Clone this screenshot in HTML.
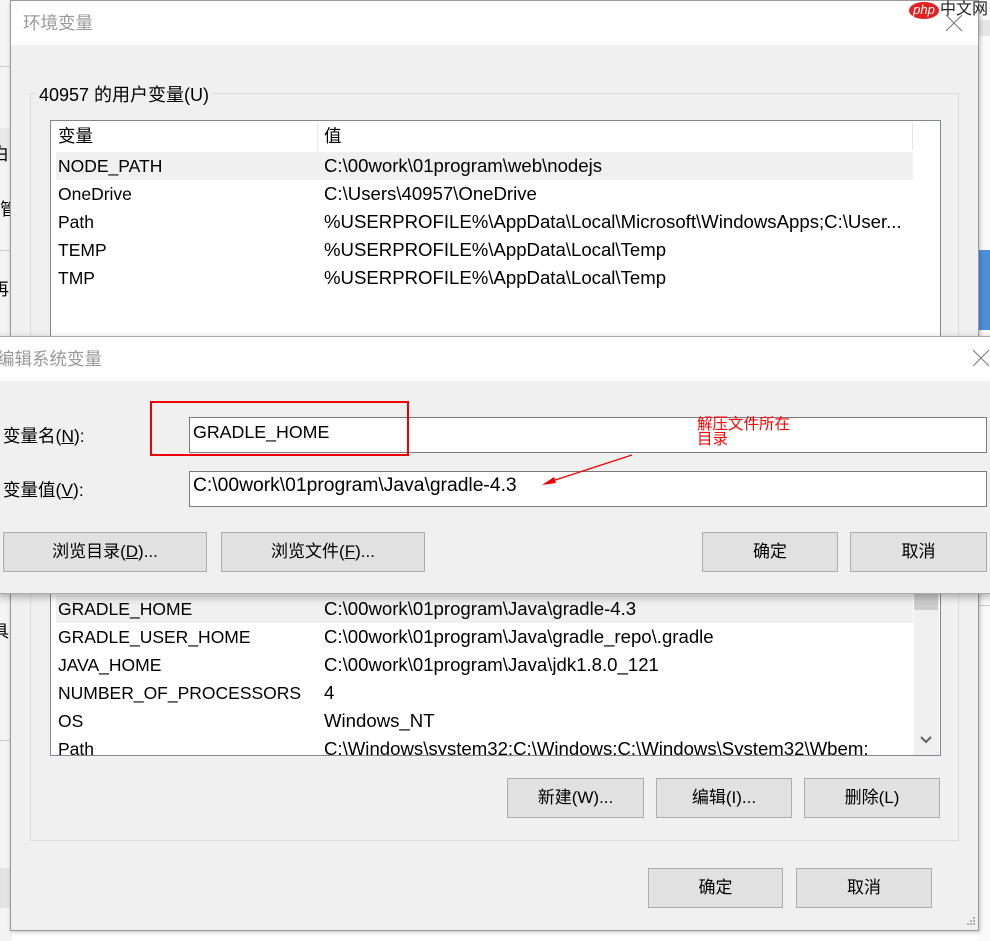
<!DOCTYPE html>
<html><head><meta charset="utf-8"><style>
*{margin:0;padding:0;box-sizing:border-box}
body{width:990px;height:941px;background:#fff;position:relative;overflow:hidden;font-family:"Liberation Sans","Noto Sans CJK SC",sans-serif;font-size:17px;color:#000}
.a{position:absolute;white-space:nowrap}
.btn{position:absolute;background:#e1e1e1;border:1px solid #adadad;text-align:center;font-size:17px}
.row{position:absolute;height:28px;line-height:28px;font-size:17.5px}
.v{font-size:18.6px}
</style></head><body>
<div class="a" style="left:0;top:0;width:12px;height:941px;background:#f4f4f4"></div>
<div class="a" style="left:0;top:66px;width:12px;height:1px;background:#ccc"></div>
<div class="a" style="left:0;top:128px;width:12px;height:32px;background:#e8e8e8"></div>
<div class="a" style="left:0;top:250px;width:12px;height:1px;background:#ccc"></div>
<div class="a" style="left:0;top:740px;width:12px;height:1px;background:#ccc"></div>
<div class="a" style="left:0;top:868px;width:12px;height:40px;background:#e4e4e4"></div>
<div class="a" style="left:0;top:195px;font-size:17px">管</div>
<div class="a" style="left:-8px;top:140px;font-size:17px">白</div>
<div class="a" style="left:-8px;top:275px;font-size:17px">再</div>
<div class="a" style="left:-8px;top:617px;font-size:17px">具</div>
<div class="a" style="left:978px;top:0;width:12px;height:941px;background:#fafafa"></div>
<div class="a" style="left:978px;top:20px;width:12px;height:16px;background:#e6e6e6"></div>
<div class="a" style="left:978px;top:250px;width:12px;height:80px;background:#4a90d9"></div>
<div class="a" style="left:978px;top:605px;width:12px;height:1px;background:#ccc"></div>

<div class="a" style="left:10px;top:0;width:969px;height:931px;background:#f0f0f0;border:1px solid #9a9a9a;box-shadow:1px 1px 4px rgba(0,0,0,.25)"></div>
<div class="a" style="left:11px;top:1px;width:967px;height:44px;background:#fff"></div>
<div class="a" style="left:23px;top:10px;color:#999;font-size:17.5px">环境变量</div>
<svg class="a" style="left:945px;top:14px" width="18" height="18"><path d="M1 1L17 17M17 1L1 17" stroke="#777" stroke-width="1"/></svg>

<div class="a" style="left:30px;top:93px;width:929px;height:748px;border:1px solid #dcdcdc"></div>
<div class="a" style="left:36px;top:81px;background:#f0f0f0;padding:0 3px;font-size:18px">40957 的用户变量(U)</div>

<div class="a" style="left:50px;top:120px;width:891px;height:240px;background:#fff;border:1px solid #828790"></div>
<div class="a" style="left:317px;top:122px;width:1px;height:28px;background:#e5e5e5"></div>
<div class="a" style="left:912px;top:122px;width:1px;height:28px;background:#e5e5e5"></div>
<div class="row" style="left:58px;top:122px">变量</div>
<div class="row" style="left:324px;top:122px">值</div>
<div class="a" style="left:56px;top:152px;width:857px;height:28px;background:#f0f0f0"></div>
<div class="row" style="left:58px;top:152px">NODE_PATH</div><div class="row v" style="left:324px;top:152px">C:\00work\01program\web\nodejs</div>
<div class="row" style="left:58px;top:180px">OneDrive</div><div class="row v" style="left:324px;top:180px">C:\Users\40957\OneDrive</div>
<div class="row" style="left:58px;top:208px">Path</div><div class="row v" style="left:324px;top:208px">%USERPROFILE%\AppData\Local\Microsoft\WindowsApps;C:\User...</div>
<div class="row" style="left:58px;top:236px">TEMP</div><div class="row v" style="left:324px;top:236px">%USERPROFILE%\AppData\Local\Temp</div>
<div class="row" style="left:58px;top:264px">TMP</div><div class="row v" style="left:324px;top:264px">%USERPROFILE%\AppData\Local\Temp</div>

<div class="a" style="left:50px;top:580px;width:891px;height:176px;background:#fff;border:1px solid #828790"></div>
<div class="a" style="left:914px;top:581px;width:25px;height:174px;background:#f0f0f0"></div>
<div class="a" style="left:914px;top:593px;width:24px;height:17px;background:#cdcdcd"></div>
<svg class="a" style="left:919px;top:735px" width="14" height="10"><path d="M2 2L7 7L12 2" stroke="#606060" stroke-width="2" fill="none"/></svg>
<div class="a" style="left:56px;top:595px;width:857px;height:28px;background:#f0f0f0"></div>
<div style="position:absolute;left:51px;top:581px;width:862px;height:174px;overflow:hidden">
<div class="row" style="left:7px;top:14px">GRADLE_HOME</div><div class="row v" style="left:273px;top:14px">C:\00work\01program\Java\gradle-4.3</div>
<div class="row" style="left:7px;top:42px">GRADLE_USER_HOME</div><div class="row v" style="left:273px;top:42px">C:\00work\01program\Java\gradle_repo\.gradle</div>
<div class="row" style="left:7px;top:70px">JAVA_HOME</div><div class="row v" style="left:273px;top:70px">C:\00work\01program\Java\jdk1.8.0_121</div>
<div class="row" style="left:7px;top:98px">NUMBER_OF_PROCESSORS</div><div class="row v" style="left:273px;top:98px">4</div>
<div class="row" style="left:7px;top:126px">OS</div><div class="row v" style="left:273px;top:126px">Windows_NT</div>
<div class="row" style="left:7px;top:154px">Path</div><div class="row v" style="left:273px;top:154px">C:\Windows\system32;C:\Windows;C:\Windows\System32\Wbem;</div>
</div>

<div class="btn" style="left:507px;top:778px;width:137px;height:40px;line-height:38px">新建(W)...</div>
<div class="btn" style="left:656px;top:778px;width:136px;height:40px;line-height:38px">编辑(I)...</div>
<div class="btn" style="left:804px;top:778px;width:136px;height:40px;line-height:38px">删除(L)</div>
<div class="btn" style="left:648px;top:868px;width:135px;height:40px;line-height:38px">确定</div>
<div class="btn" style="left:796px;top:868px;width:136px;height:40px;line-height:38px">取消</div>
<svg class="a" style="left:964px;top:916px" width="12" height="12"><g fill="#b0b0b0"><rect x="9" y="1" width="2" height="2"/><rect x="6" y="4" width="2" height="2"/><rect x="9" y="4" width="2" height="2"/><rect x="3" y="7" width="2" height="2"/><rect x="6" y="7" width="2" height="2"/><rect x="9" y="7" width="2" height="2"/></g></svg>

<div class="a" style="left:-2px;top:336px;width:994px;height:258px;background:#f0f0f0;border:1px solid #aaa;box-shadow:0 3px 8px rgba(0,0,0,.3)"></div>
<div class="a" style="left:0;top:337px;width:990px;height:44px;background:#fff"></div>
<div class="a" style="left:-3px;top:346px;color:#999;font-size:17.5px">编辑系统变量</div>
<svg class="a" style="left:972px;top:349px" width="18" height="18"><path d="M1 1L17 17M17 1L1 17" stroke="#777" stroke-width="1"/></svg>

<div class="a" style="left:3px;top:423px;font-size:17.5px">变量名(<u>N</u>):</div>
<div class="a" style="left:189px;top:417px;width:798px;height:36px;background:#fff;border:1px solid #7a7a7a"></div>
<div class="a" style="left:193px;top:422px;font-size:17.8px">GRADLE_HOME</div>
<div class="a" style="left:150px;top:401px;width:259px;height:55px;border:2px solid #e00"></div>
<div class="a" style="left:3px;top:477px;font-size:17.5px">变量值(<u>V</u>):</div>
<div class="a" style="left:189px;top:471px;width:798px;height:36px;background:#fff;border:1px solid #7a7a7a"></div>
<div class="a" style="left:193px;top:475px;font-size:19.3px">C:\00work\01program\Java\gradle-4.3</div>
<div class="a" style="left:697px;top:417px;color:#f00;font-size:15.5px;line-height:15px">解压文件所在<br>目录</div>
<svg class="a" style="left:530px;top:450px" width="110" height="40"><path d="M102 5L16 33" stroke="#e00" stroke-width="1.3"/><path d="M12 35L24 27L26 33Z" fill="#e00"/></svg>

<div class="btn" style="left:3px;top:532px;width:204px;height:40px;line-height:38px">浏览目录(<u>D</u>)...</div>
<div class="btn" style="left:221px;top:532px;width:204px;height:40px;line-height:38px">浏览文件(<u>F</u>)...</div>
<div class="btn" style="left:702px;top:532px;width:136px;height:40px;line-height:38px">确定</div>
<div class="btn" style="left:850px;top:532px;width:137px;height:40px;line-height:38px">取消</div>

<div class="a" style="left:909px;top:2px;width:30px;height:17px;background:#e52020;border-radius:50%;color:#fff;font-style:italic;font-size:13px;line-height:16px;text-align:center">php</div>
<div class="a" style="left:940px;top:0;font-size:16px;line-height:20px;color:#222">中文网</div>
</body></html>
